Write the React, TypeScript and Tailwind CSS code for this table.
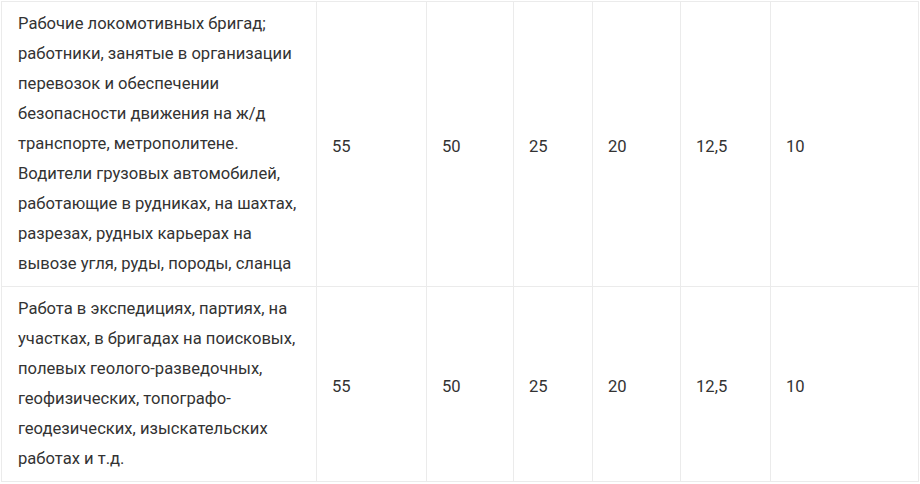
const rows = [
  {
    lines: [
      "Рабочие локомотивных бригад;",
      "работники, занятые в организации",
      "перевозок и обеспечении",
      "безопасности движения на ж/д",
      "транспорте, метрополитене.",
      "Водители грузовых автомобилей,",
      "работающие в рудниках, на шахтах,",
      "разрезах, рудных карьерах на",
      "вывозе угля, руды, породы, сланца",
    ],
    values: ["55", "50", "25", "20", "12,5", "10"],
  },
  {
    lines: [
      "Работа в экспедициях, партиях, на",
      "участках, в бригадах на поисковых,",
      "полевых геолого-разведочных,",
      "геофизических, топографо-",
      "геодезических, изыскательских",
      "работах и т.д.",
    ],
    values: ["55", "50", "25", "20", "12,5", "10"],
  },
];

export default function App() {
  return (
    <div className="bg-white pt-px pl-px">
      <table
        className="w-[918px] table-fixed border-collapse text-[16.6px] leading-[30px] text-[#333]"
        style={{ fontFamily: '"Roboto", "Liberation Sans", sans-serif' }}
      >
        <colgroup>
          <col className="w-[315px]" />
          <col className="w-[110px]" />
          <col className="w-[87px]" />
          <col className="w-[79px]" />
          <col className="w-[88px]" />
          <col className="w-[90px]" />
          <col />
        </colgroup>
        <tbody>
          {rows.map((row, i) => (
            <tr key={i}>
              <td className="border border-[#ebebeb] px-4 py-[7px] align-middle">
                {row.lines.map((l, j) => (
                  <span key={j} className="block whitespace-nowrap">
                    {l}
                  </span>
                ))}
              </td>
              {row.values.map((v, j) => (
                <td key={j} className="border border-[#ebebeb] pl-[15px] pr-4 pt-[12px] pb-[7px] align-middle">
                  {v}
                </td>
              ))}
            </tr>
          ))}
        </tbody>
      </table>
    </div>
  );
}
